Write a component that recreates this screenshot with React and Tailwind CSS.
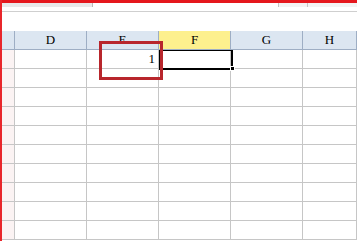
const cols = ["D", "E", "F", "G", "H"];
const rows = Array.from({ length: 10 }, (_, i) => i);

export default function App() {
  return (
    <div className="relative w-[357px] h-[241px] overflow-hidden bg-white border-l-2 border-[#e8262b] font-['Liberation_Serif',serif]">
      {/* top red bar */}
      <div className="h-[3px] bg-[#e5171d]" />

      {/* toolbar strip */}
      <div className="flex h-[4px]">
        <div className="w-[91px] bg-[#e9e9ea] border-r border-[#b9b9b9]" />
        <div className="flex-1" />
        <div className="w-[30px] border-l border-r border-[#c4c4c4] bg-[#f3f3f3]" />
        <div className="w-[49px] bg-[#f3f3f3]" />
      </div>
      <div className="h-[4px]" />
      <div className="h-[20px] border-t border-[#cfcfcf]" />

      {/* header row */}
      <div className="flex h-[19px] bg-[#dce6f1] border-b border-[#9eaec4] text-[13px] text-black">
        <div className="w-[13px] border-r border-[#9eaec4]" />
        {cols.map((c) => (
          <div
            key={c}
            className={
              "flex items-center justify-center border-r border-[#9eaec4] " +
              (c === "H" ? "flex-1 " : "w-[72px] ") +
              (c === "F" ? "bg-[#fdf08e]" : "")
            }
          >
            {c}
          </div>
        ))}
      </div>

      {/* data rows */}
      {rows.map((r) => (
        <div key={r} className="flex h-[19px] border-b border-[#c6c6c6]">
          <div className="w-[13px] border-r border-[#c6c6c6] bg-[#fbf3f3]" />
          {cols.map((c) => (
            <div
              key={c}
              className={
                "flex items-center justify-end pr-[3px] text-[13px] text-black border-r border-[#c6c6c6] " +
                (c === "H" ? "flex-1" : "w-[72px]")
              }
            >
              {r === 0 && c === "E" ? "1" : ""}
            </div>
          ))}
        </div>
      ))}

      {/* selected cell */}
      <div className="absolute left-[157px] top-[50px] w-[74px] h-[20px] border-2 border-black border-t-[1px]" />
      <div className="absolute left-[228px] top-[66px] w-[5px] h-[5px] bg-black border border-white" />

      {/* red highlight box */}
      <div className="absolute left-[97px] top-[41px] w-[64px] h-[39px] border-[3px] border-[#b8262c]" />
    </div>
  );
}
